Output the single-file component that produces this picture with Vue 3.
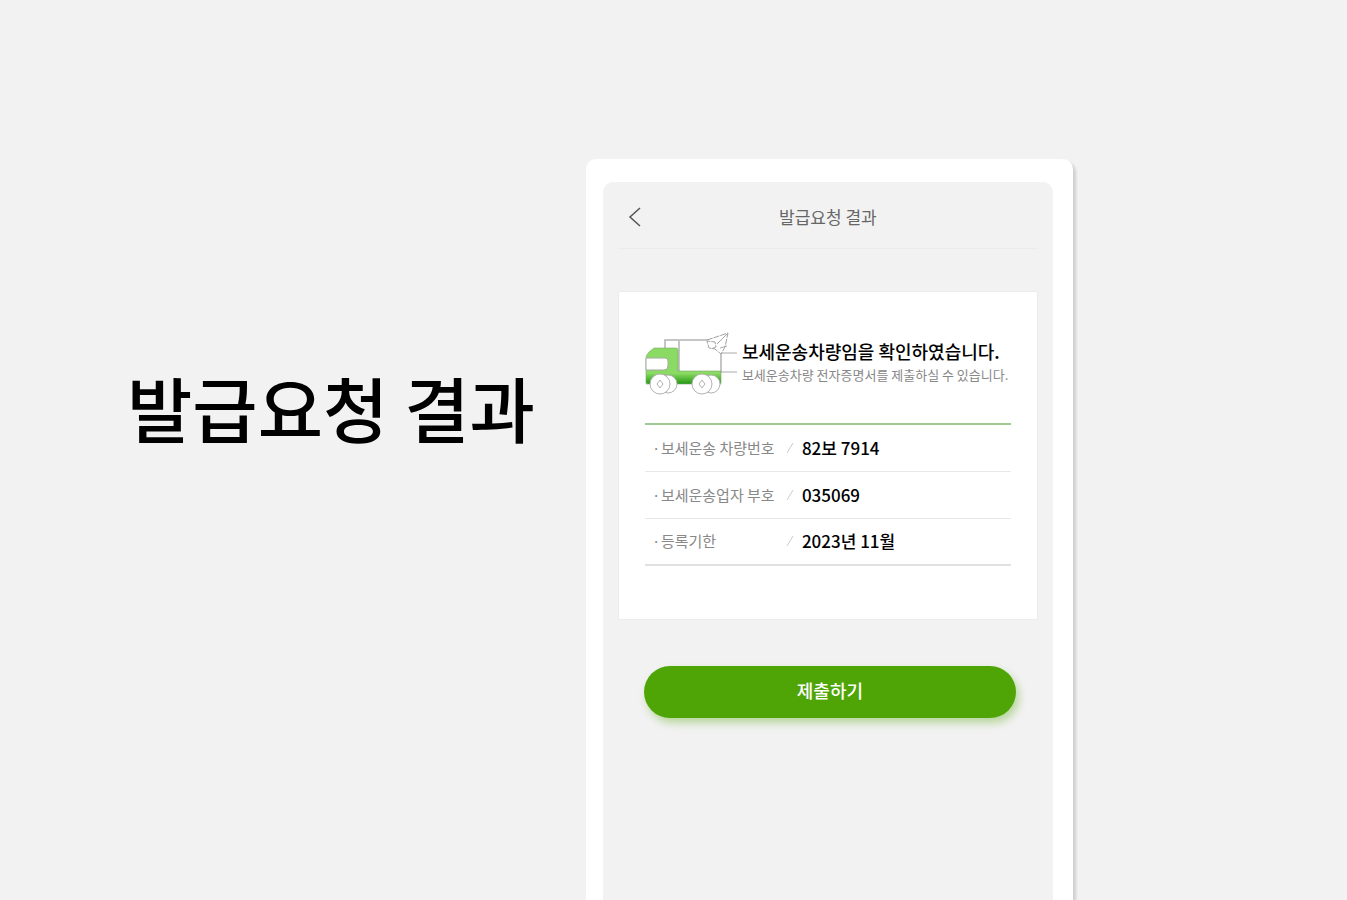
<script setup>
const title = '발급요청 결과'
const rows = [
  { label: '보세운송 차량번호', value: '82보 7914' },
  { label: '보세운송업자 부호', value: '035069' },
  { label: '등록기한', value: '2023년 11월' },
]
</script>

<template>
  <main class="page">
    <h1 class="headline">{{ title }}</h1>
    <div class="phone">
      <div class="screen">
        <header class="bar">
          <button class="back" type="button" aria-label="뒤로">
            <svg width="14" height="20" viewBox="0 0 14 20" fill="none" stroke="#555" stroke-width="1.5">
              <path d="M12 1 2 10l10 9" />
            </svg>
          </button>
          <h2 class="bar-title">{{ title }}</h2>
        </header>

        <section class="card">
          <div class="notice">
            <svg class="truck" width="97" height="66" viewBox="1 1 97 66" fill="none">
              <defs>
                <linearGradient id="skirt" x1="0" y1="0" x2="0" y2="1">
                  <stop offset="0" stop-color="#83d65b" />
                  <stop offset="1" stop-color="#239713" />
                </linearGradient>
              </defs>
              <path d="M21 18V10h44M35 11v31M77 23v20" stroke="#b2b2b2" stroke-width="1.5" />
              <path d="M10 18h22q2 0 2 2v21h43v5H2V28q0-3 3-6z" fill="#8bda64" />
              <path d="M2 44h75v8q0 2-2 2H4q-2 0-2-2z" fill="url(#skirt)" />
              <path d="M2 28q0-3 3-6l5-4h22q2 0 2 2v21h43v13H2z" stroke="#79a968" stroke-opacity="0.6" />
              <path d="M2 28h19q3 0 3 3v5q0 4-4 4H2z" fill="#fff" stroke="#a1aaa0" />
              <g fill="#fff" stroke="#b2b2b2">
                <circle cx="24" cy="54" r="9" />
                <circle cx="16" cy="54" r="10" />
                <circle cx="67" cy="54" r="9" />
                <circle cx="58" cy="54" r="10" />
                <path d="m16 50 3 4-3 4-3-4zM58 50l3 4-3 4-3-4z" />
              </g>
              <path d="M63 10 84 3l-3 14-4 7-6-5-6-1-2-7 8 1 1 5-5 2" fill="#fff" stroke="#a2a2a2" stroke-dasharray="6 1" />
              <path d="M73 14 84 3m-8 15 7-2M77 23h16M77 42h16" stroke="#aaa" />
            </svg>
            <div class="notice-text">
              <h3>보세운송차량임을 확인하였습니다.</h3>
              <p>보세운송차량 전자증명서를 제출하실 수 있습니다.</p>
            </div>
          </div>

          <table class="details">
            <tbody>
              <tr v-for="row in rows" :key="row.label">
                <th scope="row"><span class="label"><span class="dot">·</span>{{ row.label }}</span></th>
                <td class="slash">
                  <svg width="8" height="12" viewBox="0 0 8 12" stroke="#ccc" aria-hidden="true"><path d="M7 1 1 11" /></svg>
                </td>
                <td class="value">{{ row.value }}</td>
              </tr>
            </tbody>
          </table>
        </section>

        <button class="submit" type="button">제출하기</button>
      </div>
    </div>
  </main>
</template>

<style>
body {
  background: #f2f2f2;
}
</style>

<style scoped>
.page {
  box-sizing: border-box;
  display: flex;
  gap: 51px;
  min-height: 100vh;
  padding: 159px 24px 0 127px;
  font-family: "Noto Sans CJK KR", "Noto Sans", sans-serif;
  color: #000;
}
h1, h2, h3, p {
  margin: 0;
}
button {
  border: 0;
  font-family: inherit;
  cursor: pointer;
}
.headline {
  margin-top: 197px;
  font-size: 71px;
  line-height: 100px;
  font-weight: 500;
  white-space: nowrap;
}
.phone {
  box-sizing: border-box;
  flex: 0 1 487px;
  display: flex;
  padding: 23px 20px 0 17px;
  border-radius: 10px 10px 0 0;
  background: #fff;
  box-shadow: 3px 3px 3px rgba(0, 0, 0, 0.14);
}
.screen {
  flex: 1;
  min-width: 0;
  padding: 0 15px;
  border-radius: 10px 10px 0 0;
  background: #f2f2f2;
}
.bar {
  display: grid;
  grid-template-columns: 34px 1fr 34px;
  align-items: center;
  height: 62px;
  padding-top: 4px;
  border-bottom: 1px solid #ebebeb;
}
.back {
  display: flex;
  justify-content: center;
  padding: 8px 0;
  background: none;
}
.bar-title {
  font-size: 17px;
  line-height: 24px;
  font-weight: 400;
  color: #666;
  text-align: center;
}
.card {
  margin-top: 42px;
  padding: 39px 26px 53px;
  border: 1px solid #ebebeb;
  background: #fff;
}
.notice {
  display: flex;
  height: 92px;
}
.truck {
  flex: none;
}
.notice-text {
  padding-top: 8px;
  white-space: nowrap;
}
.notice-text h3 {
  font-size: 18px;
  line-height: 24px;
  font-weight: 500;
}
.notice-text p {
  font-size: 13px;
  line-height: 24px;
  color: #888;
}
.details {
  width: 100%;
  border-collapse: collapse;
  border-top: 2px solid #9fca91;
}
.details tr {
  height: 47px;
  border-bottom: 1px solid #e8e8e8;
}
.details tr:last-child {
  border-bottom: 2px solid #e0e0e0;
}
.details th,
.details td {
  padding: 0;
  text-align: left;
  line-height: 24px;
}
.details th {
  width: 141px;
  font-size: 15px;
  font-weight: 400;
  color: #888;
}
.label {
  display: flex;
  padding-left: 7px;
}
.dot {
  width: 9px;
}
.details .slash {
  width: 16px;
}
.slash svg {
  display: block;
}
.details .value {
  font-size: 17px;
  font-weight: 500;
}
.submit {
  display: block;
  width: calc(100% - 48px);
  height: 52px;
  margin: 46px 22px 0 26px;
  padding: 0 0 4px;
  border-radius: 26px;
  background: #4fa506;
  box-shadow: 3px 5px 8px rgba(79, 165, 6, 0.36);
  color: #fff;
  font-size: 18px;
  font-weight: 500;
}
</style>
